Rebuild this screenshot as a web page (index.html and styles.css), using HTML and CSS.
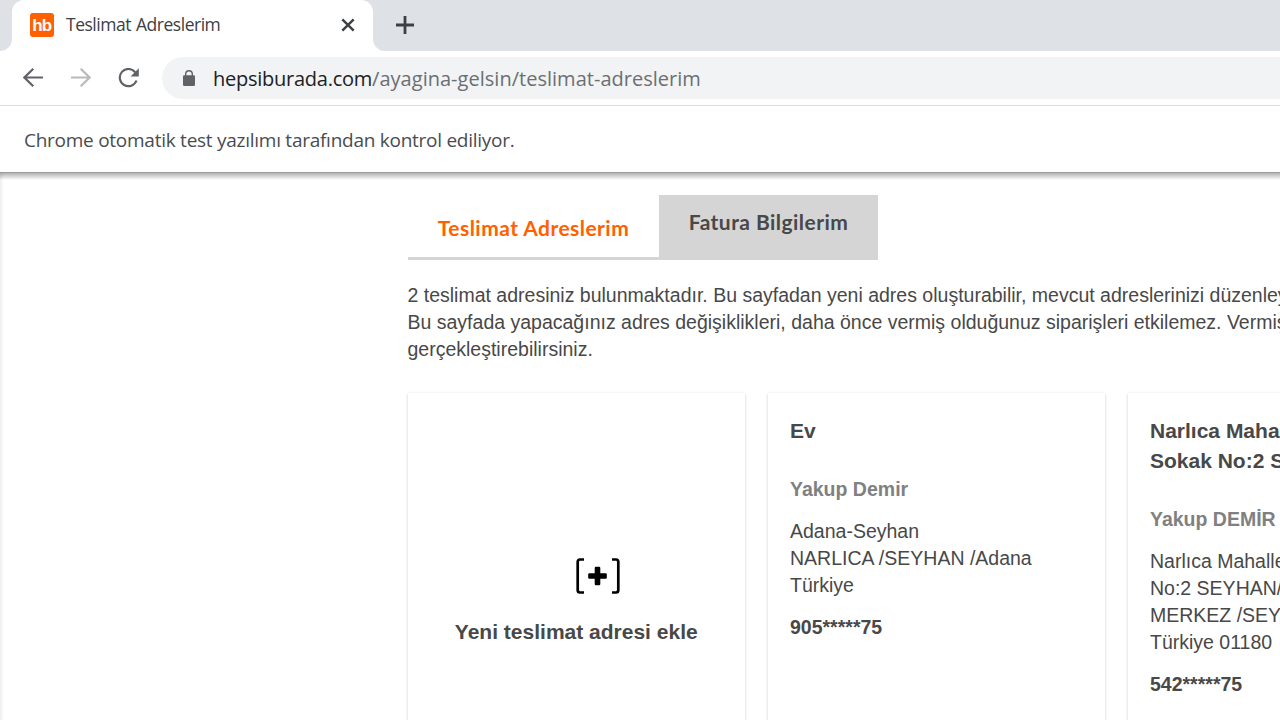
FILE: index.html
```html
<!DOCTYPE html>
<html lang="tr">
<head>
<meta charset="utf-8">
<title>Teslimat Adreslerim</title>
<link rel="stylesheet" href="styles.css">
</head>
<body>
<header class="tabstrip">
  <div class="side-tab"></div>
  <div class="tab">
    <svg class="favicon" width="24" height="24" viewBox="0 0 24 24"><rect width="24" height="24" rx="3" fill="#ff6000"/><text class="favicon-text" x="11.7" y="18" text-anchor="middle">hb</text></svg>
    <span class="tab-title">Teslimat Adreslerim</span>
    <svg class="tab-close" width="14" height="14" viewBox="0 0 14 14"><path d="M1.3 1.3 12.7 12.7M12.7 1.3 1.3 12.7" stroke="#3c4043" stroke-width="2.4"/></svg>
  </div>
  <div class="tab-rest"><svg class="plus" width="18" height="18" viewBox="0 0 18 18"><path d="M9 0V18M0 9H18" stroke="#3c4043" stroke-width="2.8"/></svg></div>
</header>
<nav class="toolbar">
  <svg class="back" width="20" height="20" viewBox="0 0 20 20" fill="none" stroke="#5f6368" stroke-width="2.2"><path d="M20 9.5H1.5M10.3.8 1.4 9.5 10.3 18.2"/></svg>
  <svg class="forward" width="20" height="20" viewBox="0 0 20 20" fill="none" stroke="#bababc" stroke-width="2.2"><path d="M0 9.5H18.5M9.7.8 18.6 9.5 9.7 18.2"/></svg>
  <svg class="reload" width="22" height="20" viewBox="0 0 22 20"><path d="M17.2 4.3A8.6 8.6 0 1 0 18.5 12.5" fill="none" stroke="#5f6368" stroke-width="2.2"/><path d="M20.8.3V8.6H12.6Z" fill="#5f6368"/></svg>
  <div class="omnibox">
    <svg width="12" height="16" viewBox="0 0 12 16"><rect y="5.3" width="12" height="10.7" rx="1.2" fill="#5f6368"/><path d="M2.7 6V4a3.3 3.3 0 0 1 6.6 0V6" fill="none" stroke="#5f6368" stroke-width="1.4"/></svg>
    <span class="url"><span class="host">hepsiburada.com</span>/ayagina-gelsin/teslimat-adreslerim</span>
  </div>
</nav>
<div class="infobar"><span>Chrome otomatik test yazılımı tarafından kontrol ediliyor.</span></div>
<main class="page">
  <div class="tabs">
    <div class="page-tab active">Teslimat Adreslerim</div>
    <div class="page-tab">Fatura Bilgilerim</div>
  </div>
  <p class="intro">2 teslimat adresiniz bulunmaktadır. Bu sayfadan yeni adres oluşturabilir, mevcut adreslerinizi düzenley<br>Bu sayfada yapacağınız adres değişiklikleri, daha önce vermiş olduğunuz siparişleri etkilemez. Vermiş<br>gerçekleştirebilirsiniz.</p>
  <div class="cards">
    <section class="card add">
      <svg class="add-icon" width="44" height="36" viewBox="0 0 44 36"><path d="M8 1.5H4Q1.7 1.5 1.7 4V32Q1.7 34.5 4 34.5H8M36 1.5H40Q42.3 1.5 42.3 4V32Q42.3 34.5 40 34.5H36" fill="none" stroke="#000" stroke-width="2.7"/><rect x="18.7" y="8.8" width="5.6" height="18.4" rx="1.2"/><rect x="12.2" y="15.2" width="18.6" height="5.6" rx="1.2"/></svg>
      <h2>Yeni teslimat adresi ekle</h2>
    </section>
    <section class="card">
      <h2>Ev</h2>
      <h3>Yakup Demir</h3>
      <p>Adana-Seyhan<br>NARLICA /SEYHAN /Adana<br>Türkiye</p>
      <strong>905*****75</strong>
    </section>
    <section class="card last">
      <h2>Narlıca Maha<br>Sokak No:2 S</h2>
      <h3>Yakup DEMİR</h3>
      <p>Narlıca Mahalle<br>No:2 SEYHAN/<br>MERKEZ /SEY<br>Türkiye 01180</p>
      <strong>542*****75</strong>
    </section>
  </div>
</main>
</body>
</html>
```
FILE: styles.css
```css
* { box-sizing: border-box; }
body { margin: 0; width: 1280px; height: 720px; overflow: hidden; background: #fff; font-family: "Open Sans", sans-serif; white-space: nowrap; display: flex; flex-direction: column; }
svg { flex: none; display: block; }

.tabstrip { display: flex; height: 51px; background: #fff; flex: none; }
.side-tab { width: 12px; background: #dee1e6; border-bottom-right-radius: 12px; }
.tab { width: 361px; display: flex; align-items: center; padding: 0 18px 1px; background: linear-gradient(#dee1e6 20px, #fff 20px); position: relative; }
.tab::before { content: ""; position: absolute; inset: 0; background: #fff; border-radius: 12px 12px 0 0; }
.tab > * { position: relative; }
.favicon-text { font: bold 17px "Liberation Sans", sans-serif; letter-spacing: -1px; fill: #fff; }
.tab-title { margin-left: 12px; font-size: 17.5px; color: #3c4043; letter-spacing: -0.48px; word-spacing: 1px; flex: 1; line-height: 24px; padding-bottom: 2px; }
.tab-rest { flex: 1; background: #dee1e6; border-bottom-left-radius: 12px; padding: 16px 0 0 23px; }

.toolbar { display: flex; align-items: center; height: 55px; border-bottom: 1px solid #dadce0; padding: 0 0 1px 23px; flex: none; }
.forward { margin-left: 28px; }
.reload { margin-left: 27px; }
.omnibox { margin: 1px 0 0 22px; flex: 1; height: 42px; background: #f1f3f4; border-radius: 21px 0 0 21px; display: flex; align-items: center; padding-left: 21px; }
.url { margin-left: 18px; font-size: 20px; color: #6b6f74; letter-spacing: 0.02px; }
.host { color: #202124; letter-spacing: -0.25px; }

.infobar { height: 67px; flex: none; border-bottom: 1px solid #999c9a; display: flex; align-items: center; padding: 2px 0 0 24px; font-size: 19px; letter-spacing: -0.26px; color: #494c50; }

.page { flex: 1; min-height: 0; overflow: hidden; padding: 22px 0 0 407.5px; font-family: "Liberation Sans", sans-serif; color: #484848; background: linear-gradient(90deg, #eee, #fff 4px); position: relative; }
.page::before { content: ""; position: absolute; inset: 0 0 auto; height: 7px; background: linear-gradient(rgba(0,0,0,.3), rgba(0,0,0,0)); }
.tabs { display: flex; height: 65px; padding-left: .5px; font: bold 21px/25px Lato, sans-serif; letter-spacing: .45px; }
.page-tab { width: 219px; text-align: center; background: #d5d5d5; padding-top: 14px; }
.page-tab.active { width: 251px; background: none; color: #ff6000; border-bottom: 3px solid #d5d5d5; padding-top: 20px; }
.intro { margin: 22px 0 30px; font-size: 19.5px; line-height: 27px; overflow: hidden; }
.cards { display: flex; gap: 22.5px; }
.card { width: 337.5px; height: 328px; flex: none; padding: 23px 22px 0 22.5px; box-shadow: 0 1px 3px rgba(0,0,0,.2); }
.card.last { width: 152.5px; padding-right: 0; }
.card h2 { margin: 0 0 30px; font-size: 21px; line-height: 30px; }
.card h3 { margin: 0 0 15px; font-size: 19.5px; line-height: 27px; color: #808080; }
.card p { margin: 0 0 15px; font-size: 19.5px; line-height: 27px; }
.card strong { display: block; font-size: 19.5px; line-height: 27px; }
.add { padding: 165px 22px 0; text-align: center; }
.add-icon { margin: 0 0 23px 146px; }
```
